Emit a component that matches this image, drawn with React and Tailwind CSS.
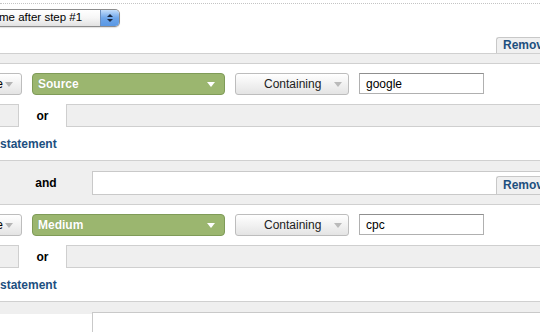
import React from "react";

// kleine Dreiecke für die Dropdowns
function Caret({ color = "border-t-white" }) {
  return (
    <span
      className={`inline-block w-0 h-0 border-l-[4px] border-r-[4px] border-t-[5px] border-l-transparent border-r-transparent ${color}`}
    />
  );
}

function RemoveTab({ tall }) {
  return (
    <div
      className={`w-[44px] shrink-0 overflow-hidden whitespace-nowrap bg-[#f0f0f0] border-t border-l border-[#c8c8c8] rounded-tl-[3px] pl-[6px] text-[12px] font-bold text-[#1e4f7e] ${
        tall ? "h-[18px] leading-[17px]" : "h-[16px] leading-[15px]"
      }`}
    >
      Remove
    </div>
  );
}

function ConditionRow({ dimension, value }) {
  return (
    <div className="h-[40px] pt-[9px] flex items-start gap-[10px]">
      <div className="-ml-[38px] w-[60px] h-[22px] shrink-0 flex items-center justify-end gap-[2px] pr-[8px] rounded-[3px] border border-[#bdbdbd] bg-linear-to-b from-white to-[#e4e4e4] text-[12px] text-black">
        <span>Include</span>
        <Caret color="border-t-[#b5b5b5]" />
      </div>
      <div className="w-[193px] h-[22px] shrink-0 flex items-center justify-between pl-[5px] pr-[9px] rounded-[4px] border border-[#7f9b58] bg-[#9bb66f]">
        <span className="text-[12px] font-bold text-white [text-shadow:0_0_1px_rgba(0,0,0,0.15)]">
          {dimension}
        </span>
        <Caret />
      </div>
      <div className="w-[114px] h-[22px] shrink-0 flex items-center pl-[28px] rounded-[3px] border border-[#bdbdbd] bg-linear-to-b from-white to-[#e4e4e4] text-[12px] text-[#222]">
        <span>Containing</span>
        <span className="ml-[13px] flex">
          <Caret color="border-t-[#bababa]" />
        </span>
      </div>
      <div className="w-[125px] h-[21px] shrink-0 flex items-center pl-[6px] bg-white border border-[#b0b0b0] border-t-[#8f8f8f] text-[12px] text-black">
        {value}
      </div>
    </div>
  );
}

function OrRow() {
  return (
    <div className="h-[23px] flex">
      <div className="-ml-[21px] w-[40px] h-full shrink-0 bg-[#efefef] border border-[#cfcfcf]" />
      <div className="w-[47px] shrink-0 flex items-center justify-center text-[12px] font-bold text-black">
        or
      </div>
      <div className="w-[500px] h-full shrink-0 bg-[#efefef] border border-[#cfcfcf]" />
    </div>
  );
}

function StatementLink() {
  return (
    <div className="h-[33px] flex items-center text-[12px] font-bold text-[#1c4f80]">
      statement
    </div>
  );
}

function AndBand() {
  return (
    <div className="h-[45px] pt-[10px] flex border-y border-[#d0d0d0] bg-[#efefef]">
      <div className="w-[92px] shrink-0 h-[24px] flex items-center justify-center text-[12px] font-bold text-black">
        and
      </div>
      <div className="flex-1 h-[24px] flex items-end justify-end bg-white border-t border-l border-b border-[#c9c9c9]">
        <RemoveTab tall />
      </div>
    </div>
  );
}

export default function App() {
  return (
    <div className="w-[540px] h-[334px] overflow-hidden bg-white font-['Liberation_Sans',Arial,sans-serif]">
      {/* Kopfbereich mit Auswahl */}
      <div className="h-[37px]">
        <div className="pt-[3px]">
          <div className="border-t border-dotted border-[#c4c4c4]" />
        </div>
        <div className="mt-[5px] w-[120px] h-[18px] flex rounded-r-[5px] border border-l-0 border-[#8c8c8c] shadow-[0_1px_1px_rgba(0,0,0,0.12)]">
          <div className="flex-1 flex items-center bg-linear-to-b from-white via-[#f6f6f6] to-[#e2e2e2] text-[11.5px] text-black">
            <span className="-ml-[1px]">me after step #1</span>
          </div>
          <div className="w-[19px] flex flex-col items-center justify-center gap-[2px] rounded-r-[4px] border-l border-[#6b8fbf] bg-linear-to-b from-[#c4defa] via-[#6ea6ea] to-[#5a98e4]">
            <span className="w-0 h-0 border-l-[3px] border-r-[3px] border-b-[3px] border-l-transparent border-r-transparent border-b-[#1b2b44]" />
            <span className="w-0 h-0 border-l-[3px] border-r-[3px] border-t-[3px] border-l-transparent border-r-transparent border-t-[#1b2b44]" />
          </div>
        </div>
      </div>

      <div className="flex justify-end">
        <RemoveTab />
      </div>
      <div className="h-[11px] border-y border-[#d0d0d0] bg-[#efefef]" />

      <ConditionRow dimension="Source" value="google" />
      <OrRow />
      <StatementLink />

      <AndBand />

      <ConditionRow dimension="Medium" value="cpc" />
      <OrRow />
      <StatementLink />

      {/* nächster Block, abgeschnitten */}
      <div className="h-[11px] border-t border-[#d0d0d0] bg-[#efefef]" />
      <div className="flex">
        <div className="w-[92px] shrink-0 h-[2px] bg-[#efefef]" />
        <div className="flex-1 h-[20px] border-t border-l border-[#c9c9c9]" />
      </div>
    </div>
  );
}
